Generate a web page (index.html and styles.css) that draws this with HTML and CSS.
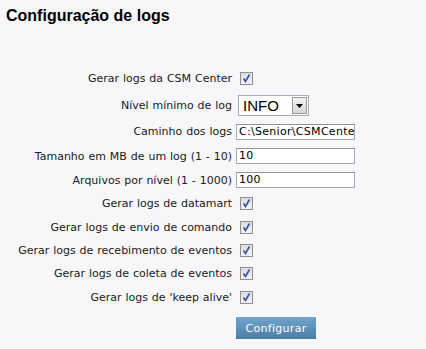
FILE: index.html
```html
<!DOCTYPE html>
<html>
<head>
<meta charset="utf-8">
<link rel="stylesheet" href="styles.css">
</head>
<body>
<h1 class="title">Configuração de logs</h1>
<div class="form">
  <div class="lbl r1">Gerar logs da CSM Center</div>
  <div class="ctl r1"><span class="chk"><svg width="11" height="11" viewBox="0 0 11 11"><path d="M2.5 5.5 L4.5 8.5 L8.5 1.5" fill="none" stroke="#3b4fa8" stroke-width="1.6"/></svg></span></div>

  <div class="lbl r2">Nível mínimo de log</div>
  <div class="ctl r2"><div class="select"><span class="sel-text">INFO</span><span class="sel-btn"><svg width="7" height="4" viewBox="0 0 7 4"><path d="M0 0 H7 L3.5 4 Z" fill="#000"/></svg></span></div></div>

  <div class="lbl r3">Caminho dos logs</div>
  <div class="ctl r3"><div class="input">C:\Senior\CSMCenter</div></div>

  <div class="lbl r4">Tamanho em MB de um log (1 - 10)</div>
  <div class="ctl r4"><div class="input">10</div></div>

  <div class="lbl r5">Arquivos por nível (1 - 1000)</div>
  <div class="ctl r5"><div class="input">100</div></div>

  <div class="lbl r6">Gerar logs de datamart</div>
  <div class="ctl r6"><span class="chk"><svg width="11" height="11" viewBox="0 0 11 11"><path d="M2.5 5.5 L4.5 8.5 L8.5 1.5" fill="none" stroke="#3b4fa8" stroke-width="1.6"/></svg></span></div>

  <div class="lbl r7">Gerar logs de envio de comando</div>
  <div class="ctl r7"><span class="chk"><svg width="11" height="11" viewBox="0 0 11 11"><path d="M2.5 5.5 L4.5 8.5 L8.5 1.5" fill="none" stroke="#3b4fa8" stroke-width="1.6"/></svg></span></div>

  <div class="lbl r8">Gerar logs de recebimento de eventos</div>
  <div class="ctl r8"><span class="chk"><svg width="11" height="11" viewBox="0 0 11 11"><path d="M2.5 5.5 L4.5 8.5 L8.5 1.5" fill="none" stroke="#3b4fa8" stroke-width="1.6"/></svg></span></div>

  <div class="lbl r9">Gerar logs de coleta de eventos</div>
  <div class="ctl r9"><span class="chk"><svg width="11" height="11" viewBox="0 0 11 11"><path d="M2.5 5.5 L4.5 8.5 L8.5 1.5" fill="none" stroke="#3b4fa8" stroke-width="1.6"/></svg></span></div>

  <div class="lbl r10">Gerar logs de 'keep alive'</div>
  <div class="ctl r10"><span class="chk"><svg width="11" height="11" viewBox="0 0 11 11"><path d="M2.5 5.5 L4.5 8.5 L8.5 1.5" fill="none" stroke="#3b4fa8" stroke-width="1.6"/></svg></span></div>

  <div class="lbl"></div>
  <div class="ctl btn-cell"><button class="btn">Configurar</button></div>
</div>
</body>
</html>
```

FILE: styles.css
```css
html, body {
  margin: 0;
  padding: 0;
  background: #f7f7f9;
}
body {
  width: 426px;
  height: 349px;
  overflow: hidden;
  font-family: "DejaVu Sans", Verdana, sans-serif;
  font-size: 11px;
  color: #000;
}
.title {
  margin: 0;
  padding: 6px 0 0 6px;
  font-family: "Liberation Sans", Arial, sans-serif;
  font-weight: bold;
  font-size: 16px;
  line-height: 20px;
  color: #000;
}
.form {
  margin-top: 38px;
  display: grid;
  grid-template-columns: 232px 190px;
  grid-template-rows: 28px 27px 25px 24px 24px 23px 24px 23px 23px 24px 30px;
  column-gap: 4px;
}
.lbl {
  display: flex;
  align-items: center;
  justify-content: flex-end;
  white-space: nowrap;
  word-spacing: 0.4px;
  color: #1a1a1a;
}
.ctl {
  display: flex;
  align-items: center;
}
.chk {
  width: 11px;
  height: 11px;
  margin-left: 4px;
  border: 1px solid #8e8f8f;
  background: linear-gradient(#dcdcde, #f4f4f6);
  display: flex;
}
.select {
  margin-left: 2px;
  width: 71px;
  height: 21px;
  border: 1px solid #a5acb2;
  background: #fff;
  display: flex;
  align-items: center;
  box-sizing: border-box;
}
.sel-text {
  flex: 1;
  padding-left: 4px;
  font-family: "Liberation Sans", Arial, sans-serif;
  font-size: 15px;
  color: #000;
}
.sel-btn {
  width: 15px;
  height: 17px;
  margin-right: 1px;
  box-sizing: border-box;
  border: 1px solid #9a9a9a;
  background: linear-gradient(#f2f2f2, #d6d6d6);
  display: flex;
  align-items: center;
  justify-content: center;
}
.input {
  width: 119px;
  height: 16px;
  box-sizing: border-box;
  border: 1px solid #a5acb2;
  border-top-color: #8e9396;
  background: #fff;
  padding-left: 2px;
  font-size: 11px;
  letter-spacing: 0.3px;
  line-height: 14px;
  white-space: nowrap;
  overflow: hidden;
}
.btn-cell {
  align-items: flex-end;
}
.btn {
  width: 80px;
  height: 22px;
  border: 0;
  padding: 0;
  margin: 0;
  background: linear-gradient(#72a5cf, #4b7ca4);
  color: #fff;
  font-family: "DejaVu Sans", Verdana, sans-serif;
  font-size: 11px;
  letter-spacing: 0.3px;
}
```
